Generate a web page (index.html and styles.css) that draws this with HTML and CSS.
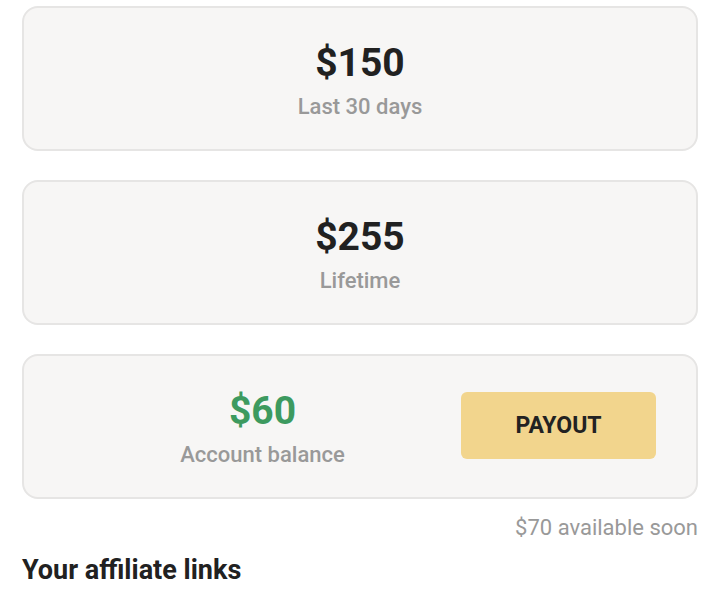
FILE: index.html
```html
<!DOCTYPE html>
<html lang="en">
<head>
<meta charset="UTF-8" />
<meta name="viewport" content="width=device-width, initial-scale=1" />
<title>Affiliate earnings</title>
<link rel="stylesheet" href="styles.css">
</head>
<body>

<div class="stats">
  <div class="card">
    <div class="amount">$150</div>
    <div class="label">Last 30 days</div>
  </div>
  <div class="card">
    <div class="amount">$255</div>
    <div class="label">Lifetime</div>
  </div>
  <div class="card balance">
    <div class="balance-info">
      <div class="amount green">$60</div>
      <div class="label">Account balance</div>
    </div>
    <button class="payout">PAYOUT</button>
  </div>
</div>
<div class="soon">$70 available soon</div>
<h2>Your affiliate links</h2>

</body>
</html>
```

FILE: styles.css
```css
body {
  font-family: Roboto, "Noto Sans", sans-serif;
  margin: 0;
  padding: 6px 22px 0 22px;
  background: #fff;
  color: #212121;
}
.stats {
  display: flex;
  flex-direction: column;
  gap: 29px;
}
.card {
  height: 145px;
  box-sizing: border-box;
  background: #f7f6f5;
  border: 2px solid #e6e5e4;
  border-radius: 16px;
  display: flex;
  flex-direction: column;
  justify-content: center;
  align-items: center;
  padding-top: 5px;
}
.amount {
  font-size: 39px;
  font-weight: 700;
  line-height: 44px;
  color: #212121;
}
.amount.green {
  color: #3d9a5f;
}
.label {
  font-size: 22px;
  font-weight: 500;
  line-height: 28px;
  margin-top: 8px;
  color: #999;
}
.card.balance {
  flex-direction: row;
  padding: 5px 40px 0 40px;
}
.balance-info {
  flex: 1;
  display: flex;
  flex-direction: column;
  align-items: center;
}
.payout {
  width: 195px;
  height: 67px;
  margin-top: -8px;
  border: none;
  border-radius: 6px;
  background: #f2d58d;
  color: #222;
  font-family: Roboto, sans-serif;
  font-size: 23px;
  font-weight: 700;
}
.soon {
  text-align: right;
  font-size: 22px;
  color: #999;
  margin-top: 17px;
  line-height: 24px;
}
h2 {
  font-size: 27px;
  font-weight: 700;
  margin: 16px 0 0 0;
  line-height: 28px;
}
```
